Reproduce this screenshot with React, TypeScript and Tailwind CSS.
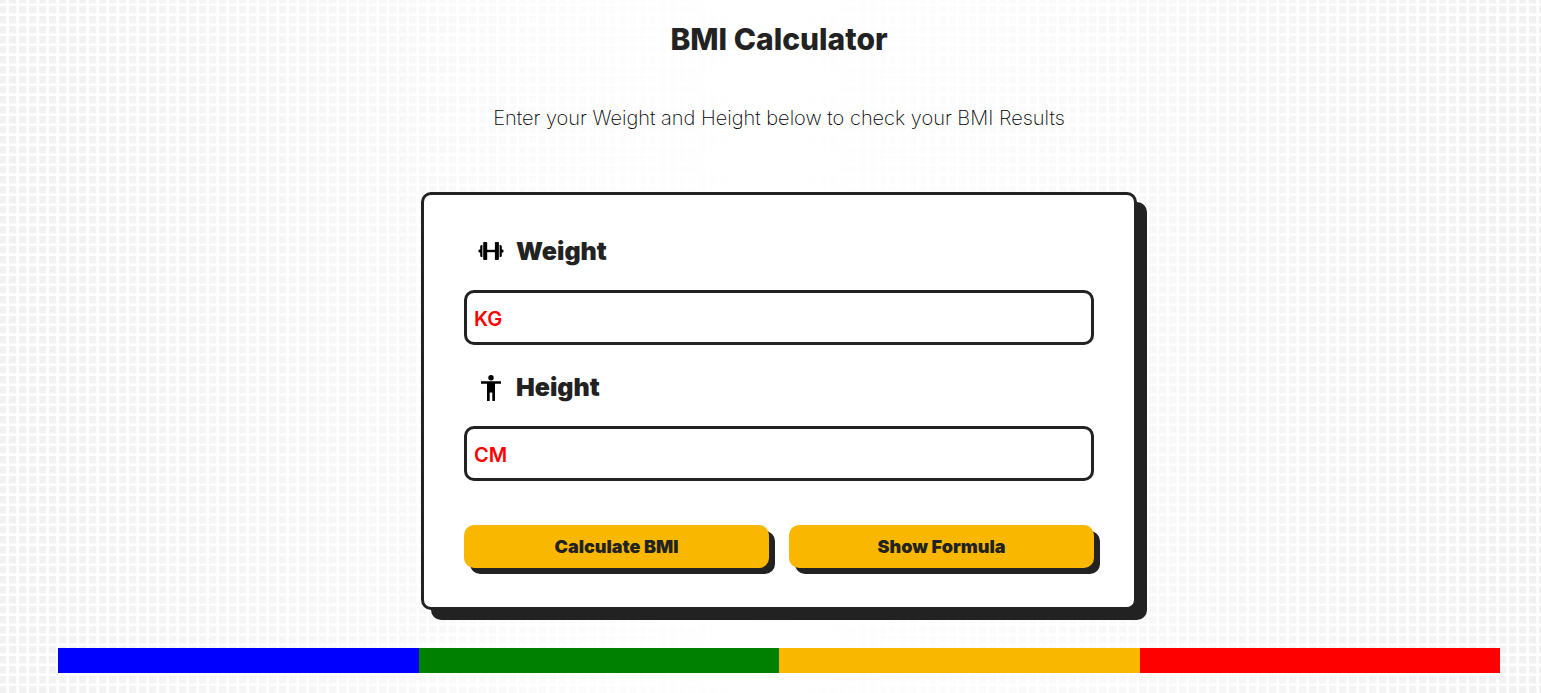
import { useState } from 'react';

function BarbellIcon() {
  return (
    <svg viewBox="0 0 26 26" className="size-[26px] shrink-0" aria-hidden="true">
      <g fill="#000">
        <rect x="5.2" y="4" width="4" height="18" rx="0.8" />
        <rect x="16.9" y="4" width="4" height="18" rx="0.8" />
        <rect x="9" y="11.800" width="8" height="2.400" />
        <path d="M4.400 7v12H3.600Q2.200 19 2.200 17.500V14.500H1.400Q.4 14.500.4 13T1.400 11.500H2.200V8.500Q2.200 7 3.600 7zM21.600 7v12h.8q1.400 0 1.400-1.500v-3h.8q1 0 1-1.500t-1-1.500h-.8v-3Q23.800 7 22.400 7z" />
      </g>
    </svg>
  );
}

function PersonIcon() {
  return (
    <svg viewBox="0 0 26 28" className="h-7 w-[26px] shrink-0" aria-hidden="true">
      <circle cx="13" cy="4.700" r="2.700" fill="#000" />
      <path d="M3 8.300h20v2.500h-6V28h-2.700v-8.500h-2.600V28H9V10.800H3z" fill="#000" />
    </svg>
  );
}

const inputClass =
  'mt-[23px] h-[55px] w-full rounded-[10px] border-3 border-[#222] bg-white px-[7px] pt-0.5 text-xl font-semibold text-[#222] placeholder:text-[#f00] outline-none';
const labelClass = 'flex items-center gap-3 pl-3.5 text-[25px] leading-8 font-black';
const buttonClass =
  'h-[43px] flex-1 cursor-pointer rounded-[10px] bg-[#fab700] text-lg font-black text-[#222] shadow-[6px_6px_0_#222]';

export default function App() {
  const [weight, setWeight] = useState('');
  const [height, setHeight] = useState('');

  return (
    <div className="min-h-screen bg-[linear-gradient(90deg,transparent_6px,#ffffffa0_6px,#ffffffa0_7px,#fff_7px,#fff_9px,transparent_9px),linear-gradient(180deg,transparent_3px,#ffffffa0_3px,#ffffffa0_4px,#fff_4px,#fff_6px,transparent_6px),linear-gradient(90deg,#f1f1f1,#fff_50%,#f1f1f1)] bg-[size:10px_10px,10px_10px,100%_100%] pt-[19px] pb-5 pl-[17px] font-['Inter',sans-serif] text-[#222]">
      <main className="flex flex-col items-center">
        <h1 className="text-[30px] leading-10 font-extrabold">BMI Calculator</h1>
        <p className="mt-[45px] text-xl leading-7 font-[250] text-black">Enter your Weight and Height below to check your BMI Results</p>
        <form
          onSubmit={(event) => event.preventDefault()}
          className="mt-[60px] w-full max-w-[716px] rounded-[10px] border-3 border-[#222] bg-white px-10 pt-10 pb-[39px] shadow-[10px_10px_0_#222]"
        >
          <label htmlFor="weight" className={labelClass}>
            <BarbellIcon />
            Weight
          </label>
          <input id="weight" inputMode="decimal" placeholder="KG" value={weight} onChange={(e) => setWeight(e.target.value)} className={inputClass} />
          <label htmlFor="height" className={`mt-[26px] ${labelClass}`}>
            <PersonIcon />
            Height
          </label>
          <input id="height" inputMode="decimal" placeholder="CM" value={height} onChange={(e) => setHeight(e.target.value)} className={inputClass} />
          <div className="mt-11 flex gap-5">
            <button type="submit" className={buttonClass}>Calculate BMI</button>
            <button type="button" className={buttonClass}>Show Formula</button>
          </div>
        </form>
      </main>
      <div className="mt-[38px] mr-[41px] ml-[41px] grid h-[25px] grid-cols-4">
        <div className="bg-[#00f]" />
        <div className="bg-[#008000]" />
        <div className="bg-[#fab700]" />
        <div className="bg-[#f00]" />
      </div>
    </div>
  );
}
